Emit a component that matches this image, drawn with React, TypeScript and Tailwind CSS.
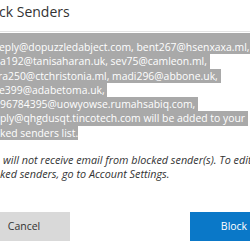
import React from "react";

const selected = [
  { text: "eply@dopuzzledabject.com, bent267@hsenxaxa.ml,\u00a0", shift: "-ml-[1px]", full: true },
  { text: "a192@tanisaharan.uk, sev75@camleon.ml,\u00a0", shift: "ml-0", full: false },
  { text: "ra250@ctchristonia.ml, madi296@abbone.uk,\u00a0", shift: "-ml-[2px]", full: false },
  { text: "e399@adabetoma.uk,\u00a0", shift: "-ml-[1px]", full: false },
  { text: "96784395@uowyowse.rumahsabiq.com,\u00a0", shift: "ml-0", full: false },
  { text: "ply@qhgdusqt.tincotech.com will be added to your\u00a0", shift: "ml-0", full: false },
  { text: "ked senders list.", shift: "ml-0", full: false },
];

const App: React.FC = () => {
  return (
    <div
      className="w-[250px] h-[250px] overflow-hidden bg-white text-[#333333]"
      style={{ fontFamily: '"Open Sans", "Liberation Sans", sans-serif' }}
    >
      {/* dialog body starts off the left edge */}
      <div className="-ml-[22px] w-[300px]">
        <div className="h-[31px] text-[14px] leading-[24px] font-normal">Block Senders</div>
        <div className="h-px bg-[#e3e3e3]" />
        <div className="h-px" />

        {/* highlighted (selected) sender list */}
        <div className="pl-[22px] text-[10.4px] text-white">
          <div className="h-[7px] bg-[#a9a9a9] -ml-[22px]" />
          {selected.map((line, i) => (
            <div
              key={i}
              className={`h-[14.25px] leading-[14.25px] whitespace-nowrap ${line.full ? "bg-[#a9a9a9] -ml-[22px] pl-[22px]" : ""}`}
            >
              <span className={`inline-block h-[14.25px] bg-[#a9a9a9] ${line.shift}`}>{line.text}</span>
            </div>
          ))}
        </div>

        <div className="pl-[22px] mt-[13px] text-[10.8px] leading-[14.25px] italic whitespace-nowrap">
          <div className="ml-[3px]">will not receive email from blocked sender(s). To edit the list of</div>
          <div className="ml-0">ked senders, go to Account Settings.</div>
        </div>

        <div className="mt-[31px] flex justify-between text-[10.5px]">
          <button className="w-[92px] h-[29px] bg-[#d9d9d9] text-[#333333]">Cancel</button>
          <button className="w-[88px] h-[29px] bg-[#0a78c8] text-white">Block</button>
        </div>
      </div>
    </div>
  );
};

export default App;
